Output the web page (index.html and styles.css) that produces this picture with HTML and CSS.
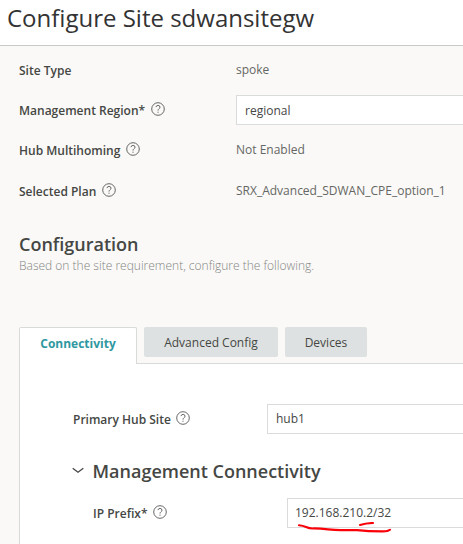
FILE: index.html
```html
<!DOCTYPE html>
<html lang="en">
<head>
<meta charset="utf-8">
<title>Configure Site sdwansitegw</title>
<link rel="stylesheet" href="styles.css">
</head>
<body>
<svg class="defs" width="0" height="0" aria-hidden="true">
  <symbol id="help" viewBox="0 0 14 14">
    <circle cx="7" cy="7" r="6.3"/>
    <path d="M4.9 5.1Q5.3 3.4 7.1 3.4Q9 3.5 9 5.2Q9 6.2 7.9 6.9Q7 7.5 7 8.6M7 9.7V10.8"/>
  </symbol>
</svg>
<header class="title"><h1>Configure Site sdwansitegw</h1></header>
<main>
  <section class="summary">
    <div class="row"><label><span>Site Type</span></label><span class="value">spoke</span></div>
    <div class="row"><label><span>Management Region*</span><svg class="help"><use href="#help"/></svg></label><div class="field">regional</div></div>
    <div class="row"><label><span>Hub Multihoming</span><svg class="help"><use href="#help"/></svg></label><span class="value">Not Enabled</span></div>
    <div class="row plan"><label><span>Selected Plan</span><svg class="help"><use href="#help"/></svg></label><span class="value">SRX_Advanced_SDWAN_CPE_option_1</span></div>
  </section>
  <section class="intro">
    <h2>Configuration</h2>
    <p>Based on the site requirement, configure the following.</p>
  </section>
  <nav class="tabs">
    <a class="tab active">Connectivity</a>
    <a class="tab advanced">Advanced Config</a>
    <a class="tab devices">Devices</a>
  </nav>
  <section class="panel">
    <div class="row primary"><label><span>Primary Hub Site</span><svg class="help"><use href="#help"/></svg></label><div class="field">hub1</div></div>
    <h3><svg class="chevron" viewBox="0 0 12 8"><path d="M.7 1.2L6 5.3L11.3 1.2"/></svg><span>Management Connectivity</span></h3>
    <div class="row prefix"><label><span>IP Prefix*</span><svg class="help"><use href="#help"/></svg></label>
      <div class="field">192.168.210.2/32
        <svg class="marks" viewBox="0 0 100 14"><path d="M6 3.3Q10 3.7 13 5Q17 6.7 21 6.4C34 6.8 38 8.2 48 8.1H64Q75 9.4 89 9.4Q95 9.5 97 7.8"/><path d="M67 3Q73 1.1 80 1"/></svg>
      </div>
    </div>
  </section>
</main>
</body>
</html>
```
FILE: styles.css
```css
* { box-sizing: border-box; }
body {
  margin: 0;
  height: 544px;
  overflow: hidden;
  background: #faf9f7;
  color: #454744;
  font: 12px/18px "Open Sans", sans-serif;
}
.defs { position: absolute; }
h1, h2, h3, p { margin: 0; }
.title {
  height: 46px;
  padding: 1px 0 0 7px;
  background: #fff;
  border-bottom: 1px solid #c8c9c9;
}
h1 {
  font-size: 24px;
  line-height: 33px;
  font-weight: 400;
  color: #333;
  white-space: nowrap;
}
.summary { padding: 4px 0 0 19px; }
.row { display: flex; align-items: center; height: 40px; }
.row.plan { height: 41px; padding-top: 1px; }
.row label {
  display: flex;
  align-items: center;
  flex: 0 0 217px;
  font-weight: 600;
  white-space: nowrap;
}
.row label span { padding-top: 1px; }
.help {
  width: 14px;
  height: 14px;
  margin: -3px 0 0 5.5px;
  fill: none;
  stroke: #555754;
  stroke-width: .9;
}
.value { color: #656764; margin-top: -1px; white-space: nowrap; }
.field {
  position: relative;
  flex: 1;
  height: 30px;
  padding: 5px 8px;
  background: #fff;
  border: 1px solid #dadbdb;
  border-right: 0;
  white-space: nowrap;
}
.summary .field { padding-top: 6px; }
.intro { padding: 21px 0 0 19px; }
h2, h3 { font-size: 18px; line-height: 25px; font-weight: 600; }
.intro p { color: #838582; font-weight: 300; line-height: 18px; }
.tabs {
  display: flex;
  align-items: flex-start;
  gap: 7px;
  height: 37px;
  margin: 52px 0 0 19px;
  border-bottom: 1px solid #d9dbdb;
}
.tab {
  height: 30px;
  background: #dde1e1;
  border-radius: 2px;
  text-align: center;
  line-height: 31px;
}
.tab.active {
  width: 118px;
  height: 37px;
  background: #fff;
  border: 1px solid #d9dbdb;
  border-bottom: 0;
  border-radius: 2px 2px 0 0;
  color: #2f98a0;
  font-weight: 700;
}
.advanced { width: 134px; }
.devices { width: 82px; }
.panel {
  height: 181px;
  margin-left: 19px;
  padding-top: 35px;
  background: #fff;
  border-left: 1px solid #d9dbdb;
}
.primary { padding-left: 53px; }
.primary label { flex-basis: 194px; }
h3 { display: flex; align-items: center; margin: 20px 0 0 52px; height: 25px; }
.chevron { width: 12px; height: 8px; margin: -1px 8.5px 0 0; fill: none; stroke: #454744; stroke-width: 1.3; }
.prefix { margin-top: 9px; padding-left: 73px; }
.prefix label { flex-basis: 194px; }
.prefix .field { padding-left: 7px; }
.marks {
  position: absolute;
  left: 5px;
  top: 23px;
  width: 100px;
  height: 14px;
  fill: none;
  stroke: #fa0008;
  stroke-width: 2.1;
  stroke-linecap: round;
}
```
